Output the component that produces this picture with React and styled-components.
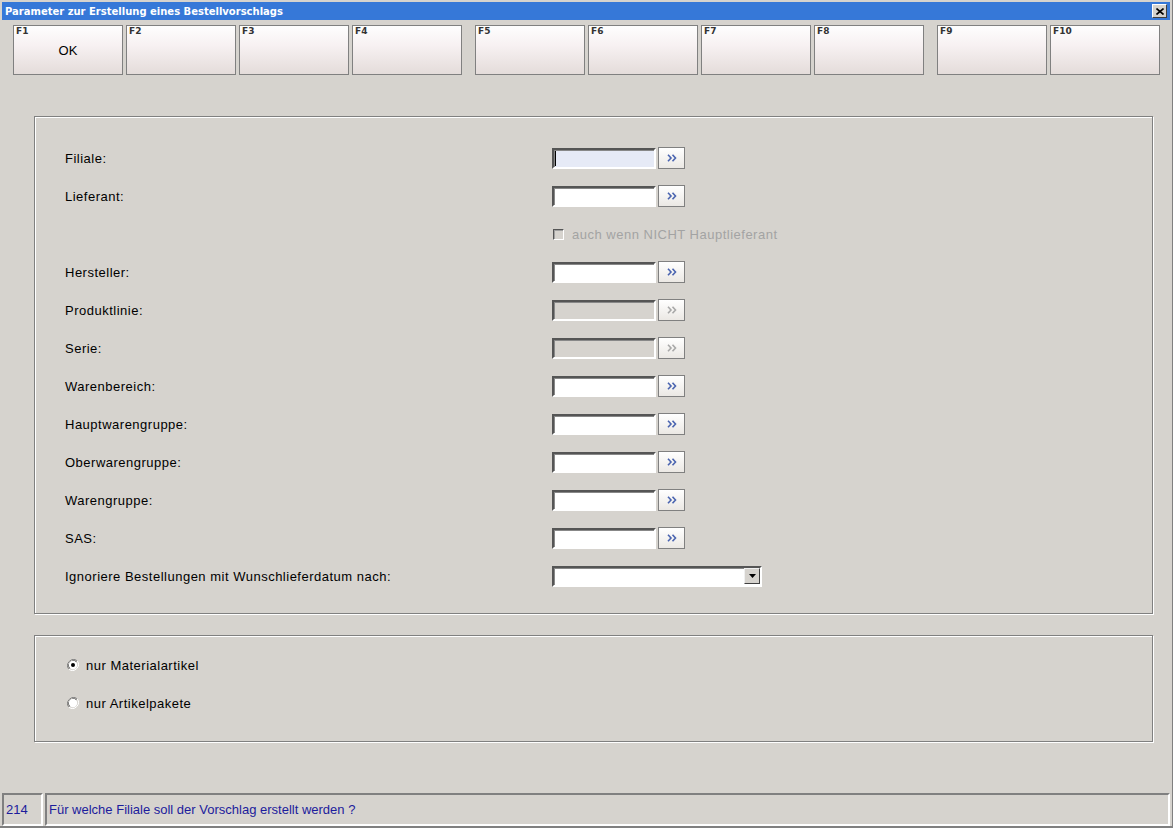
import React from "react";
import styled, { createGlobalStyle, css } from "styled-components";

const GlobalStyle = createGlobalStyle`
  html, body {
    margin: 0;
    padding: 0;
    background: #d6d3ce;
  }
  body {
    font-family: "Liberation Sans", Arial, sans-serif;
    font-size: 13px;
    color: #000;
  }
`;

const FACE = "#d6d3ce";

const sunken = css`
  border-style: solid;
  border-width: 2px;
  border-color: #555 #fff #fff #555;
  box-shadow: inset 1px 1px 0 #888;
`;

const Window = styled.div`
  width: 1173px;
  height: 828px;
  box-sizing: border-box;
  padding: 2px 2px 0 2px;
  border-right: 1px solid #808080;
  border-bottom: 2px solid #808080;
  display: flex;
  flex-direction: column;
  background: ${FACE};
`;

const TitleBar = styled.div`
  height: 18px;
  background: #3678d8;
  display: flex;
  align-items: center;
  justify-content: space-between;
  padding: 0 3px 0 3px;
  font-family: "DejaVu Sans", Tahoma, sans-serif;
  font-weight: bold;
  font-size: 10px;
  color: #fff;
`;

const CloseBtn = styled.div`
  width: 13px;
  height: 12px;
  background: ${FACE};
  border: 1px solid;
  border-color: #fff #404040 #404040 #fff;
  display: flex;
  align-items: center;
  justify-content: center;
`;

const Toolbar = styled.div`
  display: flex;
  margin: 5px 0 0 11px;
  gap: 13px;
`;

const KeyGroup = styled.div`
  display: flex;
  gap: 3px;
`;

const KeyButton = styled.div`
  position: relative;
  width: 108px;
  height: 48px;
  border: 1px solid #808080;
  background: linear-gradient(#fefefe, #f7f1f2 40%, #e4dcda);
  display: flex;
  align-items: center;
  justify-content: center;
  font-size: 13px;
`;

const KeyLabel = styled.span`
  position: absolute;
  left: 2px;
  top: 0px;
  font-family: "DejaVu Sans", sans-serif;
  font-weight: bold;
  font-size: 9px;
  color: #333;
`;

const GroupBox = styled.div`
  margin: ${(p) => p.$top}px 0 0 32px;
  width: 1087px;
  border: 1px solid #808080;
  box-shadow: 1px 1px 0 #fff, inset 1px 1px 0 #fff;
  padding: ${(p) => p.$pad};
  display: flex;
  flex-direction: column;
  gap: 16px;
  letter-spacing: 0.5px;
`;

const Row = styled.div`
  display: grid;
  grid-template-columns: 487px 1fr;
  align-items: center;
  height: 22px;
`;

const Label = styled.span``;

const Field = styled.div`
  display: flex;
  align-items: center;
  gap: 2px;
`;

const Input = styled.div`
  ${sunken};
  width: 100px;
  height: 17px;
  background: ${(p) => (p.$disabled ? FACE : p.$focus ? "#e6eaf6" : "#fff")};
  position: relative;
`;

const Caret = styled.span`
  position: absolute;
  left: 1px;
  top: 1px;
  width: 1px;
  height: 15px;
  background: #000;
`;

const PickBtn = styled.div`
  width: 25px;
  height: 20px;
  border: 1px solid #808080;
  background: linear-gradient(#fff, #ebe8e4);
  display: flex;
  align-items: center;
  justify-content: center;
`;

const CheckWrap = styled.label`
  display: flex;
  align-items: center;
  gap: 8px;
  padding-left: 1px;
  color: #a3a3a3;
`;

const CheckBox = styled.span`
  width: 9px;
  height: 9px;
  ${sunken};
  border-width: 1px;
  box-shadow: inset 1px 1px 0 #a0a0a0;
  background: ${FACE};
`;

const Combo = styled.div`
  ${sunken};
  width: 206px;
  height: 17px;
  background: #fff;
  display: flex;
  justify-content: flex-end;
`;

const ComboArrow = styled.div`
  width: 14px;
  height: 14px;
  background: ${FACE};
  border: 1.5px solid;
  border-color: #f0f0f0 #404040 #404040 #f0f0f0;
  display: flex;
  align-items: center;
  justify-content: center;
`;

const RadioRow = styled.label`
  height: 22px;
  display: flex;
  align-items: center;
  gap: 7px;
  padding-left: 2px;
`;

const StatusBar = styled.div`
  margin-top: auto;
  display: flex;
  gap: 2px;
  height: 33px;
  color: #1c1c9c;
`;

const StatusCell = styled.div`
  border: 2px solid;
  border-color: #808080 #fff #fff #808080;
  display: flex;
  align-items: center;
  padding-left: 2px;
  box-sizing: border-box;
  ${(p) => (p.$grow ? "flex: 1;" : `width: ${p.$w}px;`)}
`;

function Chevrons({ disabled }) {
  const c = disabled ? "#a8a8a8" : "#4a64b0";
  return (
    <svg width="10" height="8" viewBox="0 0 10 8">
      <path d="M1 0.8 L4 4 L1 7.2" fill="none" stroke={c} strokeWidth="1.6" />
      <path d="M5.5 0.8 L8.5 4 L5.5 7.2" fill="none" stroke={c} strokeWidth="1.6" />
    </svg>
  );
}

function LookupField({ disabled, focus }) {
  return (
    <Field>
      <Input $disabled={disabled} $focus={focus}>
        {focus && <Caret />}
      </Input>
      <PickBtn>
        <Chevrons disabled={disabled} />
      </PickBtn>
    </Field>
  );
}

function Radio({ checked }) {
  return (
    <svg width="12" height="12" viewBox="0 0 12 12">
      <path d="M10.2 1.8 A6 6 0 0 0 1.8 10.2" fill="none" stroke="#808080" strokeWidth="1" />
      <path d="M9.4 2.6 A4.9 4.9 0 0 0 2.6 9.4" fill="none" stroke="#404040" strokeWidth="1" />
      <path d="M1.8 10.2 A6 6 0 0 0 10.2 1.8" fill="none" stroke="#fff" strokeWidth="1" />
      <circle cx="6" cy="6" r="4.2" fill="#fff" />
      {checked && <circle cx="6" cy="6" r="2" fill="#000" />}
    </svg>
  );
}

const keys = [
  ["F1", "F2", "F3", "F4"],
  ["F5", "F6", "F7", "F8"],
  ["F9", "F10"],
];

const fields = [
  { label: "Filiale:", focus: true },
  { label: "Lieferant:" },
  { check: "auch wenn NICHT Hauptlieferant" },
  { label: "Hersteller:" },
  { label: "Produktlinie:", disabled: true },
  { label: "Serie:", disabled: true },
  { label: "Warenbereich:" },
  { label: "Hauptwarengruppe:" },
  { label: "Oberwarengruppe:" },
  { label: "Warengruppe:" },
  { label: "SAS:" },
];

export default function App() {
  return (
    <>
      <GlobalStyle />
      <Window>
        <TitleBar>
          <span>Parameter zur Erstellung eines Bestellvorschlags</span>
          <CloseBtn>
            <svg width="8" height="7" viewBox="0 0 8 7">
              <path d="M0.5 0.5 L7.5 6.5 M7.5 0.5 L0.5 6.5" stroke="#000" strokeWidth="1.6" />
            </svg>
          </CloseBtn>
        </TitleBar>

        <Toolbar>
          {keys.map((group, gi) => (
            <KeyGroup key={gi}>
              {group.map((k) => (
                <KeyButton key={k}>
                  <KeyLabel>{k}</KeyLabel>
                  {k === "F1" ? "OK" : null}
                </KeyButton>
              ))}
            </KeyGroup>
          ))}
        </Toolbar>

        <GroupBox $top={41} $pad="30px 0 26px 30px">
          {fields.map((f, i) =>
            f.check ? (
              <Row key={i}>
                <span />
                <CheckWrap>
                  <CheckBox />
                  {f.check}
                </CheckWrap>
              </Row>
            ) : (
              <Row key={i}>
                <Label>{f.label}</Label>
                <LookupField disabled={f.disabled} focus={f.focus} />
              </Row>
            )
          )}
          <Row>
            <Label>Ignoriere Bestellungen mit Wunschlieferdatum nach:</Label>
            <Combo>
              <ComboArrow>
                <svg width="7" height="4" viewBox="0 0 7 4">
                  <path d="M0 0 H7 L3.5 4 Z" fill="#000" />
                </svg>
              </ComboArrow>
            </Combo>
          </Row>
        </GroupBox>

        <GroupBox $top={21} $pad="18px 0 27px 30px">
          <RadioRow>
            <Radio checked />
            nur Materialartikel
          </RadioRow>
          <RadioRow>
            <Radio />
            nur Artikelpakete
          </RadioRow>
        </GroupBox>

        <StatusBar>
          <StatusCell $w={41}>214</StatusCell>
          <StatusCell $grow>Für welche Filiale soll der Vorschlag erstellt werden ?</StatusCell>
        </StatusBar>
      </Window>
    </>
  );
}
